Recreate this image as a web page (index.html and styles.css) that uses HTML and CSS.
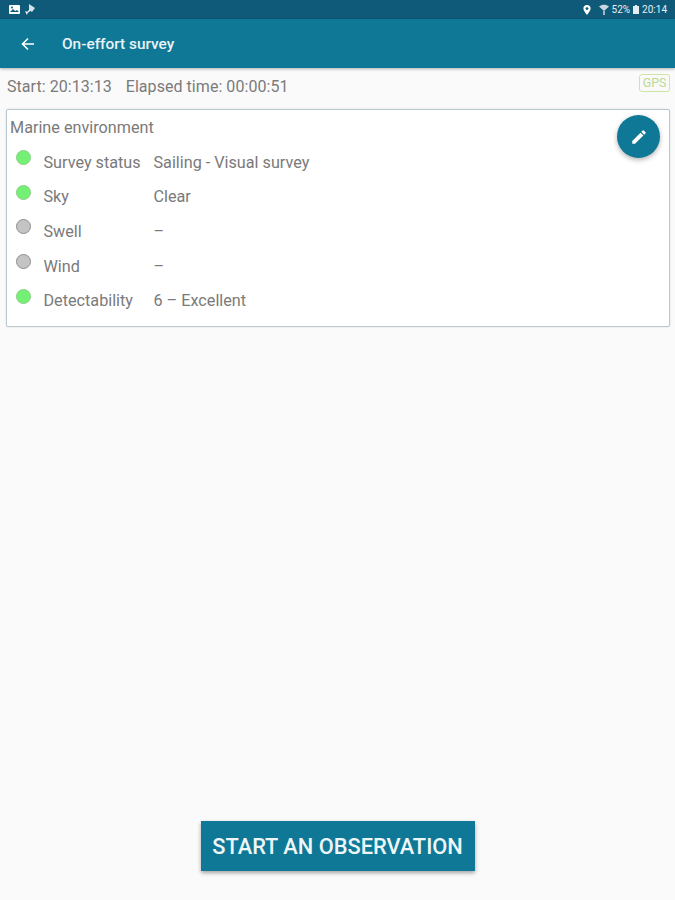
FILE: index.html
```html
<!DOCTYPE html>
<html>

<head>
    <title>On-effort survey</title>
    <link rel="stylesheet" href="styles.css">
</head>

<body>
    <div class="status-bar">
        <div class="status-left">
            <svg class="status-icon" width="13" height="11" viewBox="0 0 13 11">
                <rect x="1" y="1" width="11" height="9" rx="1" fill="#fff"/>
                <path d="M2 8l3-3 2 2 2-1 2 2z" fill="#0f5a78"/>
                <circle cx="4" cy="3.6" r="1" fill="#0f5a78"/>
            </svg>
            <svg class="status-icon" width="13" height="13" viewBox="0 0 13 13">
                <path d="M5 1l6 4-3 4-3-2z" fill="#d5e2e8"/>
                <path d="M1 8l3 1-1 3z" fill="#fff"/>
                <path d="M4 9l2-2" stroke="#fff" stroke-width="1.5"/>
            </svg>
        </div>
        <div class="status-right">
            <svg width="8" height="10" viewBox="0 0 8 10">
                <path d="M4 0a3.6 3.6 0 0 1 3.6 3.6C7.6 6 4 10 4 10S.4 6 .4 3.6A3.6 3.6 0 0 1 4 0z" fill="#fff"/>
                <circle cx="4" cy="3.6" r="1.4" fill="#0f5a78"/>
            </svg>
            <svg class="wifi" width="10" height="11" viewBox="0 0 10 11">
                <path d="M0 2.5C3 0 7 0 10 2.5L5 7z" fill="#c9d8df"/>
                <path d="M4 7h2v4H4z" fill="#9fb9c5"/>
            </svg>
            <span>52%</span>
            <svg width="6" height="9" viewBox="0 0 6 9">
                <path d="M2 0h2v1h2v8H0V1h2z" fill="#e4edf1"/>
            </svg>
            <span>20:14</span>
        </div>
    </div>

    <header class="app-bar">
        <svg class="back" width="16" height="16" viewBox="0 0 16 16">
            <path d="M14 8H3M8 2.5L2.5 8 8 13.500" fill="none" stroke="#fff" stroke-width="1.600"/>
        </svg>
        <h1>On-effort survey</h1>
    </header>

    <div class="times">
        <span>Start: 20:13:13</span>
        <span>Elapsed time: 00:00:51</span>
        <span class="gps">GPS</span>
    </div>

    <section class="card">
        <h2>Marine environment</h2>
        <button class="fab">
            <svg width="18" height="18" viewBox="0 0 24 24">
                <path d="M3 17.250V21h3.750L17.810 9.940l-3.750-3.750L3 17.250zM20.710 7.040a1 1 0 0 0 0-1.410l-2.340-2.340a1 1 0 0 0-1.410 0l-1.830 1.830 3.750 3.750 1.830-1.830z" fill="#fff"/>
            </svg>
        </button>
        <div class="row">
            <span class="dot green"></span>
            <span class="name">Survey status</span>
            <span>Sailing - Visual survey</span>
        </div>
        <div class="row">
            <span class="dot green"></span>
            <span class="name">Sky</span>
            <span>Clear</span>
        </div>
        <div class="row">
            <span class="dot grey"></span>
            <span class="name">Swell</span>
            <span>–</span>
        </div>
        <div class="row">
            <span class="dot grey"></span>
            <span class="name">Wind</span>
            <span>–</span>
        </div>
        <div class="row">
            <span class="dot green"></span>
            <span class="name">Detectability</span>
            <span>6 – Excellent</span>
        </div>
    </section>

    <div class="bottom">
        <button class="start">START AN OBSERVATION</button>
    </div>
</body>

</html>
```

FILE: styles.css
```css
html,
body {
    height: 100%;
}

body {
    margin: 0;
    height: 900px;
    overflow: hidden;
    display: flex;
    flex-direction: column;
    font-family: Roboto, "Liberation Sans", sans-serif;
    background-color: #fafafa;
    color: #7a7a7a;
}

.status-bar {
    height: 19px;
    padding: 0 8px;
    display: flex;
    justify-content: space-between;
    align-items: center;
    background-color: #0f5a78;
    color: #e8f0f3;
    font-size: 10px;
}

.status-left,
.status-right {
    display: flex;
    align-items: center;
}

.status-left {
    gap: 3px;
}

.status-right {
    gap: 3px;
}

.wifi {
    margin-left: 5px;
}

.app-bar {
    height: 49px;
    padding-left: 20px;
    display: flex;
    align-items: center;
    background-color: #0f7896;
    box-shadow: 0 1px 3px rgba(0, 0, 0, 0.3);
}

.app-bar h1 {
    margin: 0 0 0 26px;
    color: #e8f3f6;
    font-size: 15.400px;
    font-weight: 500;
}

.times {
    height: 36px;
    padding: 0 5px 0 7px;
    display: flex;
    align-items: center;
    gap: 14px;
    font-size: 16px;
    letter-spacing: 0.05px;
}

.gps {
    margin-left: auto;
    margin-bottom: 6px;
    padding: 0 2.500px;
    border: 1px solid #cde5a5;
    border-radius: 3px;
    color: #bcd98c;
    font-size: 12.500px;
    line-height: 16px;
    letter-spacing: 0;
}

.card {
    position: relative;
    height: 216px;
    margin: 5px 5px 0 6px;
    padding: 0 3px;
    border: 1px solid #b9cbd1;
    border-radius: 2px;
    background-color: #fff;
    box-shadow: 0 0 2px rgba(0, 0, 0, 0.15);
}

.card h2 {
    margin: 0;
    height: 35px;
    line-height: 35px;
    font-size: 16.200px;
    font-weight: 400;
}

.fab {
    position: absolute;
    top: 5px;
    right: 9px;
    width: 43px;
    height: 43px;
    padding: 0;
    border: none;
    border-radius: 50%;
    display: flex;
    align-items: center;
    justify-content: center;
    background-color: #0f7896;
    box-shadow: 0 2px 5px rgba(0, 0, 0, 0.3);
}

.row {
    height: 34.600px;
    padding-left: 6px;
    display: flex;
    align-items: center;
    font-size: 16.200px;
}

.name {
    width: 110px;
    margin-left: 12.500px;
}

.dot {
    width: 15px;
    height: 15px;
    margin-top: -9px;
    border-radius: 50%;
    box-sizing: border-box;
}

.green {
    background-color: #74f074;
    border: 1px solid #8ccf8c;
}

.grey {
    background-color: #c4c4c4;
    border: 1px solid #8f8f8f;
}

.bottom {
    margin-top: auto;
    padding-bottom: 29px;
    display: flex;
    justify-content: center;
}

.start {
    width: 274px;
    height: 50px;
    padding: 0;
    border: none;
    background-color: #0f7896;
    color: #eef6f8;
    font-family: Roboto, "Liberation Sans", sans-serif;
    font-size: 21.800px;
    font-weight: 500;
    box-shadow: 0 2px 4px rgba(0, 0, 0, 0.35);
}
```
